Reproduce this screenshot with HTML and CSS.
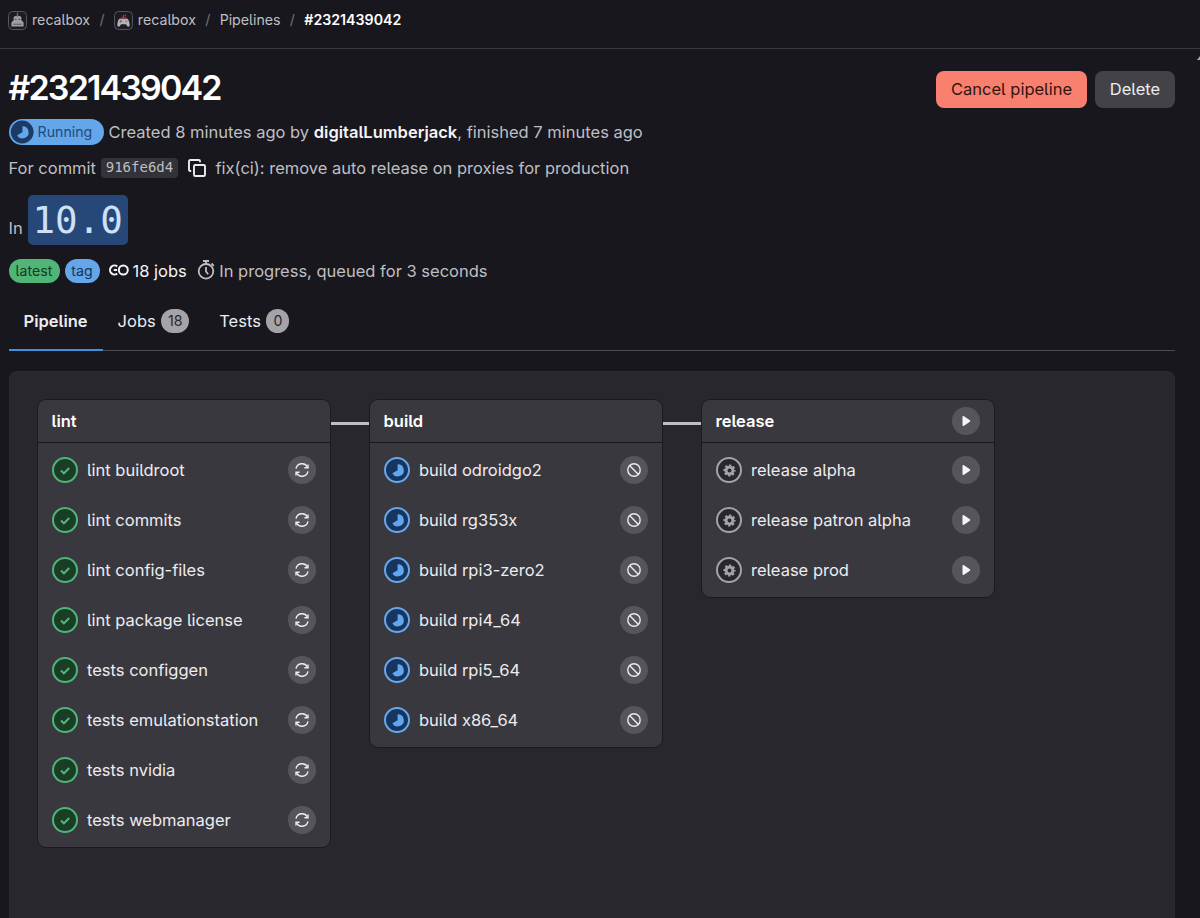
FILE: index.html
```
<!DOCTYPE html>
<html lang="en">
<head>
<meta charset="utf-8">
<title>Pipeline #2321439042</title>
<link rel="stylesheet" href="styles.css">
</head>
<body>
<svg class="sprite" aria-hidden="true">
  <symbol id="running" viewBox="0 0 26 26"><circle cx="13" cy="13" r="12" fill="#163660" stroke="#68a7ec" stroke-width="2"/><path d="M13.6 7.2a6.1 6.1 0 1 1-5.2 9.1l5.2-3z" fill="#63a6f0"/></symbol>
  <symbol id="success" viewBox="0 0 26 26"><circle cx="13" cy="13" r="12" fill="#1a3d26" stroke="#4fb57a" stroke-width="2"/><path d="M9 13.6l2.9 2.8 5.3-5.3" fill="none" stroke="#52b87a" stroke-width="2.1"/></symbol>
  <symbol id="manual" viewBox="0 0 26 26"><circle cx="13" cy="13" r="12" fill="#28272d" stroke="#a4a3a8" stroke-width="2"/><circle cx="13.5" cy="13.5" r="3.4" fill="none" stroke="#a4a3a8" stroke-width="2.8"/><circle cx="13.5" cy="13.5" r="5" fill="none" stroke="#a4a3a8" stroke-width="2.2" stroke-dasharray="2.3 1.627" stroke-dashoffset="1.15"/></symbol>
  <symbol id="retry" viewBox="0 0 28 28"><g fill="none" stroke="#ececef" stroke-width="1.4"><path d="M8 12.6A6.2 6.2 0 0 1 19.4 10.8"/><path d="M20 8.4v3.4h-3.6"/><path d="M20 15.4A6.2 6.2 0 0 1 8.6 17.2"/><path d="M8 19.6v-3.4h3.6"/></g></symbol>
  <symbol id="cancel" viewBox="0 0 28 28"><g fill="none" stroke="#ececef" stroke-width="1.4"><circle cx="14" cy="14" r="6.2"/><path d="M9.6 9.6l8.8 8.8"/></g></symbol>
  <symbol id="play" viewBox="0 0 28 28"><path d="M10.5 9.8c0-.7.5-1 1.1-.7l6.3 4.2c.5.4.5 1 0 1.4l-6.3 4.2c-.6.3-1.1 0-1.1-.7z" fill="#f4f3f8"/></symbol>
</svg>

<header class="topbar">
  <svg class="avatar" viewBox="0 0 19 19"><rect x=".5" y=".5" width="18" height="18" rx="4" fill="#1d1c22" stroke="#55545b"/><path d="M3.4 15.6V11.4l2.2-2.2V6.8q0-2 3.9-2t3.9 2v2.4l2.2 2.2v4.2z" fill="#a09fa4"/><path d="M9.5 1.6v4.2" stroke="#b14a5c" stroke-width="1.4"/><path d="M6.6 8.4h2M10.4 8.4h2M5.4 13.2h8.2" stroke="#5a595f" stroke-width="1.1"/></svg>
  <span class="crumb">recalbox</span><span class="slash">/</span>
  <svg class="avatar" viewBox="0 0 19 19"><rect x=".5" y=".5" width="18" height="18" rx="4" fill="#1d1c22" stroke="#55545b"/><path d="M5.2 7.8h8.4q1.4 1.3 2.1 5.5.2 2.5-1.4 2.5-1 0-2.3-2.6H7q-1.3 2.6-2.3 2.6-1.7 0-1.4-2.5.6-4.2 1.9-5.5z" fill="#b3b2b7"/><path d="M6.6 7.2h6.2M9.4 6.8V4M11.4 3.4v2" stroke="#a63c4d" stroke-width="1.2"/><path d="M5.5 10.3h2.6M6.8 9v2.6M11.5 10.3h1.8" stroke="#6a696f"/></svg>
  <span class="crumb">recalbox</span><span class="slash">/</span>
  <span class="crumb flush">Pipelines</span><span class="slash">/</span>
  <b class="crumb flush current">#2321439042</b>
  <svg class="edge" viewBox="0 0 3 4"><path d="M0 4L3 0v4z" fill="#a9a8ad"/></svg>
</header>

<main class="page">
  <div class="title-row">
    <h1 class="title">#2321439042</h1>
    <div class="actions">
      <button class="btn danger">Cancel pipeline</button>
      <button class="btn neutral">Delete</button>
    </div>
  </div>
  <div class="row created">
    <span class="status"><svg class="status-icon" viewBox="0 0 26 26"><circle cx="13.2" cy="13" r="11.4" fill="#1c3a63"/><path d="M13.4 7.2a6.1 6.1 0 1 1-5.2 9.1l5.2-3z" fill="#63a6e9"/></svg><span class="status-text">Running</span></span>
    <span class="text created-text">Created 8 minutes ago by <b>digitalLumberjack</b>, finished 7 minutes ago</span>
  </div>
  <div class="row commit">
    <span class="text">For commit</span>
    <code class="sha">916fe6d4</code>
    <svg class="copy" viewBox="0 0 18 18"><g fill="none" stroke="#ececef" stroke-width="1.9"><rect x="6" y="6" width="11" height="11" rx="1.3"/><path d="M3.2 12H2.3Q1 12 1 10.7V2.3Q1 1 2.3 1h8.4Q12 1 12 2.3v.9"/></g></svg>
    <span class="text message">fix(ci): remove auto release on proxies for production</span>
  </div>
  <div class="row ref">
    <span class="text in">In</span>
    <code class="branch">10.0</code>
  </div>
  <div class="row facts">
    <span class="badge green">latest</span>
    <span class="badge blue">tag</span>
    <svg class="jobs-icon" viewBox="0 0 20 12"><g fill="none" stroke="#f4f3f8" stroke-width="2"><path d="M8.2 2.4A4.5 4.5 0 1 0 8.2 9.6M4.8 6h3.2"/><circle cx="14.3" cy="6" r="4.5"/></g></svg>
    <span class="text jobs">18 jobs</span>
    <svg class="timer" viewBox="0 0 18 20"><g fill="none" stroke="#bfbfc3" stroke-width="1.8"><circle cx="9" cy="11.3" r="7.3"/><path d="M6 1h6M9 1v3M9 7v4.5l2.2 2.8M14.5 3.5l2.3 2.3"/></g></svg>
    <span class="text">In progress, queued for 3 seconds</span>
  </div>

  <nav class="tabs">
    <a class="tab active">Pipeline</a>
    <a class="tab">Jobs<span class="count wide">18</span></a>
    <a class="tab">Tests<span class="count">0</span></a>
  </nav>

  <section class="graph">
    <div class="stage">
      <div class="stage-head"><b>lint</b></div>
      <div class="job"><svg class="ico"><use href="#success"/></svg><span class="name">lint buildroot</span><svg class="act"><use href="#retry"/></svg></div>
      <div class="job"><svg class="ico"><use href="#success"/></svg><span class="name">lint commits</span><svg class="act"><use href="#retry"/></svg></div>
      <div class="job"><svg class="ico"><use href="#success"/></svg><span class="name">lint config-files</span><svg class="act"><use href="#retry"/></svg></div>
      <div class="job"><svg class="ico"><use href="#success"/></svg><span class="name">lint package license</span><svg class="act"><use href="#retry"/></svg></div>
      <div class="job"><svg class="ico"><use href="#success"/></svg><span class="name">tests configgen</span><svg class="act"><use href="#retry"/></svg></div>
      <div class="job"><svg class="ico"><use href="#success"/></svg><span class="name">tests emulationstation</span><svg class="act"><use href="#retry"/></svg></div>
      <div class="job"><svg class="ico"><use href="#success"/></svg><span class="name">tests nvidia</span><svg class="act"><use href="#retry"/></svg></div>
      <div class="job"><svg class="ico"><use href="#success"/></svg><span class="name">tests webmanager</span><svg class="act"><use href="#retry"/></svg></div>
    </div>
    <div class="link"></div>
    <div class="stage">
      <div class="stage-head"><b>build</b></div>
      <div class="job"><svg class="ico"><use href="#running"/></svg><span class="name">build odroidgo2</span><svg class="act"><use href="#cancel"/></svg></div>
      <div class="job"><svg class="ico"><use href="#running"/></svg><span class="name">build rg353x</span><svg class="act"><use href="#cancel"/></svg></div>
      <div class="job"><svg class="ico"><use href="#running"/></svg><span class="name">build rpi3-zero2</span><svg class="act"><use href="#cancel"/></svg></div>
      <div class="job"><svg class="ico"><use href="#running"/></svg><span class="name">build rpi4_64</span><svg class="act"><use href="#cancel"/></svg></div>
      <div class="job"><svg class="ico"><use href="#running"/></svg><span class="name">build rpi5_64</span><svg class="act"><use href="#cancel"/></svg></div>
      <div class="job"><svg class="ico"><use href="#running"/></svg><span class="name">build x86_64</span><svg class="act"><use href="#cancel"/></svg></div>
    </div>
    <div class="link"></div>
    <div class="stage">
      <div class="stage-head"><b>release</b><svg class="act"><use href="#play"/></svg></div>
      <div class="job"><svg class="ico"><use href="#manual"/></svg><span class="name">release alpha</span><svg class="act"><use href="#play"/></svg></div>
      <div class="job"><svg class="ico"><use href="#manual"/></svg><span class="name">release patron alpha</span><svg class="act"><use href="#play"/></svg></div>
      <div class="job"><svg class="ico"><use href="#manual"/></svg><span class="name">release prod</span><svg class="act"><use href="#play"/></svg></div>
    </div>
  </section>
</main>
</body>
</html>
```
FILE: styles.css
```
* { box-sizing: border-box; }
body {
  margin: 0;
  height: 918px;
  overflow: hidden;
  display: flex;
  flex-direction: column;
  background: #18171d;
  color: #ececef;
  font: 16.5px/24px Inter, "Noto Sans", sans-serif;
  font-feature-settings: "cv05";
  white-space: nowrap;
}
svg { display: block; flex: none; }
b { font-weight: 600; }
.sprite { position: absolute; width: 0; height: 0; }

.topbar {
  position: relative;
  flex: none;
  height: 49px;
  padding: 0 0 8px 8px;
  display: flex;
  align-items: center;
  border-bottom: 1px solid #3a383f;
  font-size: 14.2px;
  color: #bfbfc3;
}
.avatar { width: 19px; height: 19px; }
.crumb { margin-left: 5px; }
.flush { margin-left: 0; }
.current { color: #fff; }
.slash { width: 23.7px; text-align: center; color: #737278; }
.edge { position: absolute; right: 0; top: 56px; width: 3px; height: 4px; }

.page {
  flex: 1;
  min-height: 0;
  padding: 20px 25px 0 8.5px;
  display: flex;
  flex-direction: column;
}
.title-row {
  display: flex;
  justify-content: space-between;
  height: 40px;
}
.title {
  margin: 0;
  font-size: 34px;
  line-height: 38px;
  font-weight: 600;
  letter-spacing: -1.85px;
  color: #fff;
}
.actions { display: flex; gap: 8px; padding-top: 2px; }
.btn {
  height: 37px;
  border: 0;
  border-radius: 8px;
  padding: 0 0 2px;
  font: inherit;
}
.danger { width: 151px; background: #f97f6e; color: #33150f; }
.neutral { width: 80px; background: #434247; color: #ececef; }

.row { display: flex; align-items: center; flex: none; }
.text { padding-bottom: 1px; color: #bfbfc3; }
.text b { color: #f4f3f8; }
.created { height: 46px; }
.status {
  display: flex;
  align-items: center;
  width: 95px;
  height: 26px;
  border-radius: 13px;
  background: #63a6e9;
  color: #234a7c;
  font-size: 14.2px;
}
.status-icon { width: 26px; height: 26px; margin-right: 3px; }
.created-text { margin-left: 5px; }
.commit { height: 26px; }
.sha {
  margin-left: 5px;
  width: 77px;
  height: 20px;
  border-radius: 4px;
  background: #333238;
  color: #bfbfc3;
  font: 14px/19px "DejaVu Sans Mono", monospace;
  text-align: center;
}
.copy { width: 18px; height: 18px; margin: 0 9px 0 10.5px; }
.ref { height: 50px; margin-top: 14px; }
.in { padding-top: 16px; }
.branch {
  margin-left: 5px;
  width: 100px;
  height: 50px;
  border-radius: 5px;
  background: #284779;
  color: #cbe2f9;
  font: 37.5px/50px "DejaVu Sans Mono", monospace;
  text-align: center;
}
.facts { height: 24px; margin-top: 14px; }
.badge { height: 24px; border-radius: 12px; font-size: 14.2px; text-align: center; }
.green { width: 51px; background: #50b576; color: #123c20; }
.blue { width: 35px; margin-left: 5px; background: #63a6e9; color: #17345c; }
.jobs-icon { width: 20px; height: 12px; margin: 0 4px 2px 9px; }
.jobs { color: #f4f3f8; }
.timer { width: 18px; height: 20px; margin: 0 4px 2px 10.5px; }

.tabs {
  flex: none;
  display: flex;
  height: 56px;
  margin-top: 12px;
  border-bottom: 1px solid #4c4b51;
}
.tab { display: flex; align-items: center; padding: 0 15px 3px; }
.tab.active { margin-bottom: -1px; padding: 2px 15px 4px; border-bottom: 2px solid #428fdc; font-weight: 600; }
.count {
  margin-left: 5.5px;
  width: 23px;
  height: 24px;
  border-radius: 12px;
  background: #a4a3a8;
  color: #28272d;
  font-size: 14.2px;
  text-align: center;
}
.count.wide { width: 28px; }

.graph {
  flex: 1;
  min-height: 0;
  display: flex;
  align-items: flex-start;
  margin-top: 20px;
  padding: 27px;
  background: #28272d;
  border: 1px solid #2b2a30;
  border-bottom: 0;
  border-radius: 8px 8px 0 0;
}
.stage {
  width: 294px;
  padding-bottom: 2px;
  border: 1px solid #1b1a20;
  border-radius: 9px;
  background: #3a383f;
}
.stage-head {
  display: flex;
  align-items: center;
  justify-content: space-between;
  height: 43px;
  margin-bottom: 2px;
  padding: 0 13.5px 0 14px;
  border-bottom: 1px solid #18171d;
  color: #fff;
}
.link { width: 38px; height: 3px; margin-top: 23px; background: #bfbfc3; }
.job { display: flex; align-items: center; height: 50px; padding: 0 13.5px 0 14px; }
.ico { width: 26px; height: 26px; }
.name { flex: 1; margin-left: 9.5px; }
.act { width: 28px; height: 28px; border-radius: 50%; background: #57555c; }
```
